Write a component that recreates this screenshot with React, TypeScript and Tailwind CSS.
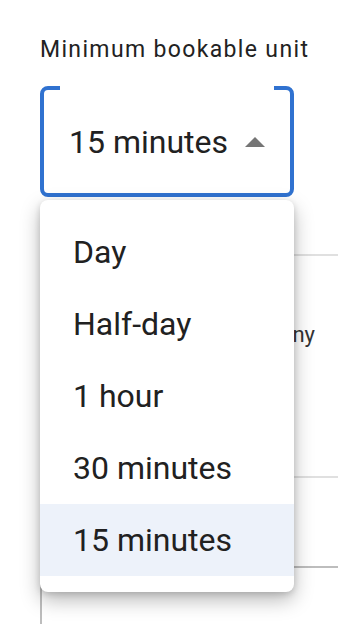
import React from 'react';

// options shown in the open select menu
const units = ['Day', 'Half-day', '1 hour', '30 minutes', '15 minutes'];

const App = () => {
  const selected = '15 minutes';

  return (
    <div className="relative h-[624px] w-full overflow-hidden bg-white font-['Roboto',sans-serif] text-[#212121]">
      <div className="pl-10 pt-[37px]">
        <p className="text-[23px] leading-[26px] tracking-[1.35px] text-[#222]">Minimum bookable unit</p>

        {/* outlined select, focused */}
        <fieldset className="mt-[23px] h-[111px] w-[254px] rounded-lg border-4 border-[#3072d0]">
          <legend className="ml-4 h-0 w-[214px] p-0" />
          <div className="flex h-full items-center pl-[25px]">
            <span className="text-[32px] leading-none">{selected}</span>
            <svg width="20" height="10" viewBox="0 0 20 10" className="ml-[17px]">
              <path d="M0 10 L10 0 L20 10 Z" fill="#757575" />
            </svg>
          </div>
        </fieldset>

        {/* rest of the form, mostly covered by the menu */}
        <div className="mt-[57px] h-[2px] bg-[#e0e0e0]" />
        <div className="flex justify-end pr-[23px] pt-[66px]">
          <span className="whitespace-nowrap text-[22px] leading-[26px] text-[#333]">Company</span>
        </div>
        <div className="mt-[128px] h-[2px] bg-[#e0e0e0]" />
        <div className="mt-[88px] h-[120px] rounded-tl-md border-l-2 border-t-2 border-[#bdbdbd]" />
      </div>

      {/* open menu */}
      <div className="absolute left-10 top-[200px] w-[254px] rounded-lg bg-white py-4 shadow-[0_8px_20px_rgba(0,0,0,0.28),0_2px_6px_rgba(0,0,0,0.15)]">
        {units.map((u) => (
          <div
            key={u}
            className={`flex h-[72px] items-center pl-[33px] text-[32px] leading-none ${u === selected ? 'bg-[#edf2fa]' : ''}`}
          >
            {u}
          </div>
        ))}
      </div>
    </div>
  );
};

export default App;
